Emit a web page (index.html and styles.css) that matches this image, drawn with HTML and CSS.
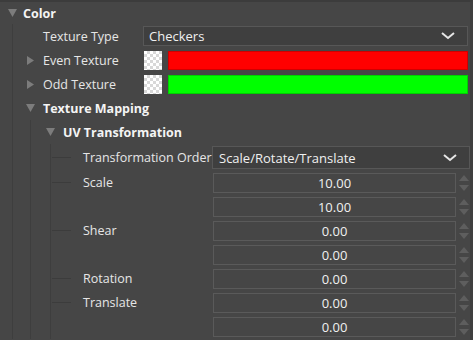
FILE: index.html
```html
<!DOCTYPE html>
<html lang="en">
<head>
  <meta charset="UTF-8">
  <title>Color Properties</title>
  <link rel="stylesheet" href="styles.css">
</head>
<body>
  <div class="panel">
    <div class="row lv0">
      <span class="twisty"><svg width="9" height="8" viewBox="0 0 9 8"><path d="M0 0H9L4.5 8Z"/></svg></span>
      <span class="label bold">Color</span>
    </div>
    <div class="branch b0">
      <div class="row lv1">
        <span class="twisty"></span>
        <span class="label w1">Texture Type</span>
        <div class="select sel1">
          <span>Checkers</span>
          <svg class="chev" width="14" height="8" viewBox="0 0 14 8"><path d="M1 1L7 6L13 1"/></svg>
        </div>
      </div>
      <div class="row lv1">
        <span class="twisty"><svg width="7" height="9" viewBox="0 0 7 9"><path d="M0 0V9L7 4.5Z"/></svg></span>
        <span class="label w1">Even Texture</span>
        <span class="swatch"></span>
        <span class="bar red"></span>
      </div>
      <div class="row lv1">
        <span class="twisty"><svg width="7" height="9" viewBox="0 0 7 9"><path d="M0 0V9L7 4.5Z"/></svg></span>
        <span class="label w1">Odd Texture</span>
        <span class="swatch"></span>
        <span class="bar green"></span>
      </div>
      <div class="row lv1">
        <span class="twisty"><svg width="9" height="8" viewBox="0 0 9 8"><path d="M0 0H9L4.5 8Z"/></svg></span>
        <span class="label bold">Texture Mapping</span>
      </div>
      <div class="branch b1">
        <div class="row lv2">
          <span class="twisty"><svg width="9" height="8" viewBox="0 0 9 8"><path d="M0 0H9L4.5 8Z"/></svg></span>
          <span class="label bold">UV Transformation</span>
        </div>
        <div class="branch b2">
          <div class="row lv3 tall">
            <span class="dash"></span>
            <span class="label w3">Transformation Order</span>
            <div class="select sel3">
              <span>Scale/Rotate/Translate</span>
              <svg class="chev" width="14" height="8" viewBox="0 0 14 8"><path d="M1 1L7 6L13 1"/></svg>
            </div>
          </div>

          <div class="group">
            <div class="glabel"><span class="dash"></span><span class="label w3">Scale</span></div>
            <div class="fields">
              <div class="num"><span class="box">10.00</span><span class="spin"></span></div>
              <div class="num"><span class="box">10.00</span><span class="spin"></span></div>
            </div>
          </div>
          <div class="group">
            <div class="glabel"><span class="dash"></span><span class="label w3">Shear</span></div>
            <div class="fields">
              <div class="num"><span class="box">0.00</span><span class="spin"></span></div>
              <div class="num"><span class="box">0.00</span><span class="spin"></span></div>
            </div>
          </div>
          <div class="group">
            <div class="glabel"><span class="dash"></span><span class="label w3">Rotation</span></div>
            <div class="fields">
              <div class="num"><span class="box">0.00</span><span class="spin"></span></div>
            </div>
          </div>
          <div class="group">
            <div class="glabel"><span class="dash"></span><span class="label w3">Translate</span></div>
            <div class="fields">
              <div class="num"><span class="box">0.00</span><span class="spin"></span></div>
              <div class="num"><span class="box">0.00</span><span class="spin"></span></div>
            </div>
          </div>
        </div>
      </div>
    </div>
  </div>
</body>
</html>
```
FILE: styles.css
```css
* {
  margin: 0;
  padding: 0;
  box-sizing: border-box;
}

body {
  background: #464646;
  font-family: 'Open Sans', 'Liberation Sans', sans-serif;
  font-size: 12.5px;
  color: #e6e6e6;
  overflow: hidden;
}

.panel {
  width: 473px;
  height: 340px;
  border-top: 2px solid #3c3c3c;
  border-right: 3px solid #3f3f3f;
  overflow: hidden;
}

.row {
  display: flex;
  align-items: center;
  height: 24px;
}

.row.lv0 {
  height: 22px;
  padding-left: 3px;
}

.row.lv1 { padding-left: 8px; }
.row.lv2 { padding-left: 10px; }
.row.lv3 { padding-left: 1px; }

.row.tall {
  height: 27px;
}

.branch {
  border-left: 1px solid #3e3e3e;
}

.b0 { margin-left: 12px; }
.b1 { margin-left: 17px; }
.b2 { margin-left: 19px; }

.twisty {
  width: 18px;
  height: 16px;
  margin-right: 4px;
  display: flex;
  align-items: center;
  justify-content: center;
  flex-shrink: 0;
}

.lv0 .twisty {
  margin-right: 2px;
}

.twisty svg path {
  fill: #7c7c7c;
}

.dash {
  width: 19px;
  height: 1px;
  background: #3c3c3c;
  margin-right: 12px;
  flex-shrink: 0;
}

.label {
  white-space: nowrap;
  flex-shrink: 0;
}

.bold {
  font-weight: bold;
  color: #f4f4f4;
}

.w1 { width: 100px; }
.w3 { width: 129px; }

.select {
  display: flex;
  align-items: center;
  justify-content: space-between;
  background: #3f3f3f;
  border: 1px solid #575757;
  color: #f0f0f0;
  font-size: 13px;
}

.sel1 {
  width: 325px;
  height: 20px;
  padding: 0 12px 0 5px;
}

.sel3 {
  width: 258px;
  height: 23px;
  padding: 0 12px 0 6px;
}

.chev path {
  fill: none;
  stroke: #e6e6e6;
  stroke-width: 2;
}

.swatch {
  width: 18px;
  height: 19px;
  margin-left: 1px;
  background-color: #fff;
  background-image:
    linear-gradient(45deg, #d8d8d8 25%, transparent 25%, transparent 75%, #d8d8d8 75%),
    linear-gradient(45deg, #d8d8d8 25%, transparent 25%, transparent 75%, #d8d8d8 75%);
  background-size: 6px 6px;
  background-position: 0 0, 3px 3px;
  flex-shrink: 0;
}

.bar {
  width: 300px;
  height: 19px;
  margin-left: 6px;
  border: 1px solid rgba(0, 0, 0, 0.18);
}

.red { background: #ff0000; }
.green { background: #00ff00; }

.group {
  display: flex;
}

.glabel {
  display: flex;
  align-items: center;
  height: 22px;
  padding-left: 1px;
}

.fields {
  display: flex;
  flex-direction: column;
}

.num {
  display: flex;
  align-items: center;
  height: 24px;
}

.box {
  width: 243px;
  height: 20px;
  margin-left: 1px;
  border: 1px solid #5a5a5a;
  display: flex;
  align-items: center;
  justify-content: center;
  color: #f0f0f0;
  font-size: 13px;
}

.spin {
  width: 10px;
  height: 16px;
  margin-left: 3px;
  display: flex;
  flex-direction: column;
  justify-content: space-between;
  align-items: center;
}

.spin::before,
.spin::after {
  content: '';
  width: 0;
  height: 0;
  border-left: 5px solid transparent;
  border-right: 5px solid transparent;
}

.spin::before {
  border-bottom: 6px solid #5e5e5e;
}

.spin::after {
  border-top: 6px solid #5e5e5e;
}
```
